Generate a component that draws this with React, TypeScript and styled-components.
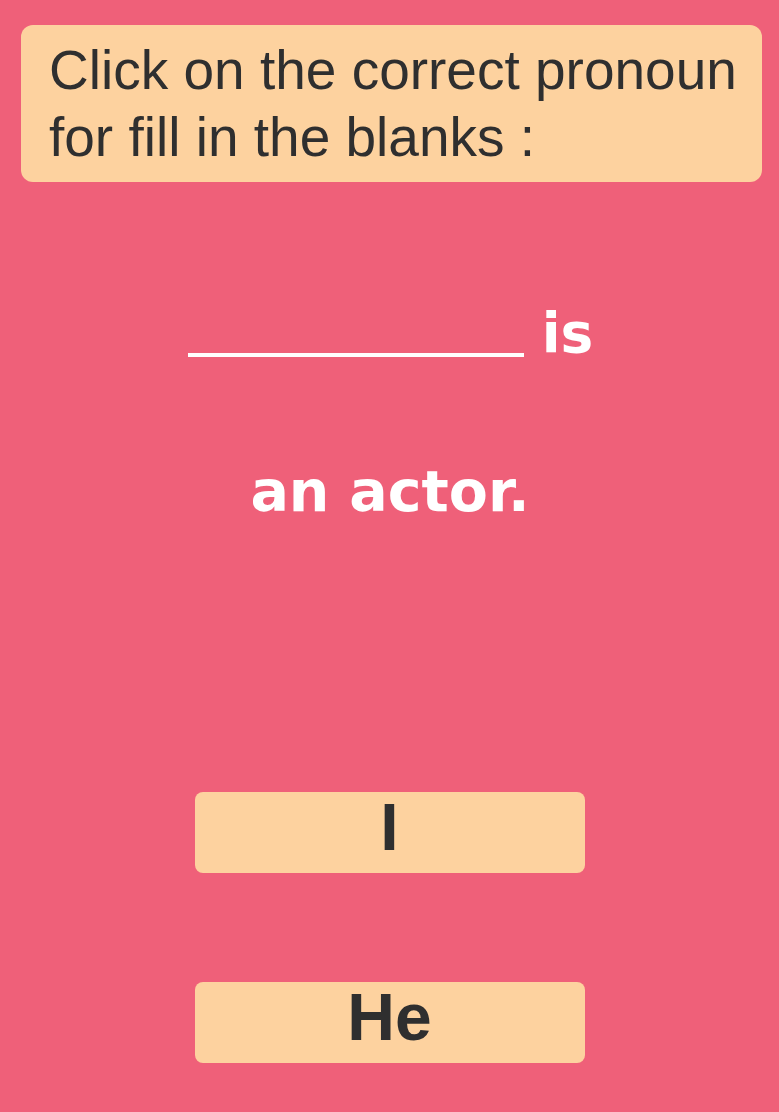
import React from "react";
import styled, { createGlobalStyle } from "styled-components";

const GlobalStyle = createGlobalStyle`
  html, body {
    margin: 0;
    padding: 0;
    background: #ef6079;
  }
  body {
    font-family: "Liberation Sans", Arial, sans-serif;
  }
`;

const Page = styled.main`
  min-height: 1112px;
  box-sizing: border-box;
  padding: 25px 17px 0 21px;
  display: flex;
  flex-direction: column;
  align-items: center;
  background: #ef6079;
`;

const Instruction = styled.div`
  align-self: stretch;
  box-sizing: border-box;
  height: 157px;
  background: #fdd29f;
  border-radius: 12px;
  padding: 12px 16px 0 28px;
  font-family: "Liberation Sans", Arial, sans-serif;
  font-size: 55px;
  line-height: 67px;
  color: #2f2f2f;
  white-space: nowrap;
`;

const SentenceRow = styled.div`
  margin-top: 119px;
  margin-right: 2px;
  display: flex;
  align-items: flex-end;
  gap: 18px;
`;

const Blank = styled.span`
  display: block;
  width: 336px;
  height: 4px;
  margin-bottom: 8px;
  background: #ffffff;
`;

const Word = styled.span<{ $size?: number }>`
  font-family: "DejaVu Sans", sans-serif;
  font-weight: bold;
  font-size: ${(p) => p.$size ?? 55}px;
  line-height: 64px;
  color: #ffffff;
`;

const Continuation = styled(Word)`
  display: block;
  margin-top: 94px;
  margin-right: 3px;
`;

const Options = styled.div`
  margin-top: 269px;
  margin-right: 4px;
  display: flex;
  flex-direction: column;
  gap: 109px;
`;

const Option = styled.button`
  width: 390px;
  height: 81px;
  box-sizing: border-box;
  border: none;
  border-radius: 8px;
  background: #fdd29f;
  padding: 0 0 10px;
  font-family: "Liberation Sans", Arial, sans-serif;
  font-weight: bold;
  font-size: 66px;
  line-height: 71px;
  color: #2f2f2f;
  cursor: pointer;
`;

export default function App() {
  return (
    <>
      <GlobalStyle />
      <Page>
        <Instruction>
          Click on the correct pronoun
          <br />
          for fill in the blanks :
        </Instruction>
        <SentenceRow>
          <Blank />
          <Word>is</Word>
        </SentenceRow>
        <Continuation $size={57}>an actor.</Continuation>
        <Options>
          <Option>I</Option>
          <Option>He</Option>
        </Options>
      </Page>
    </>
  );
}
